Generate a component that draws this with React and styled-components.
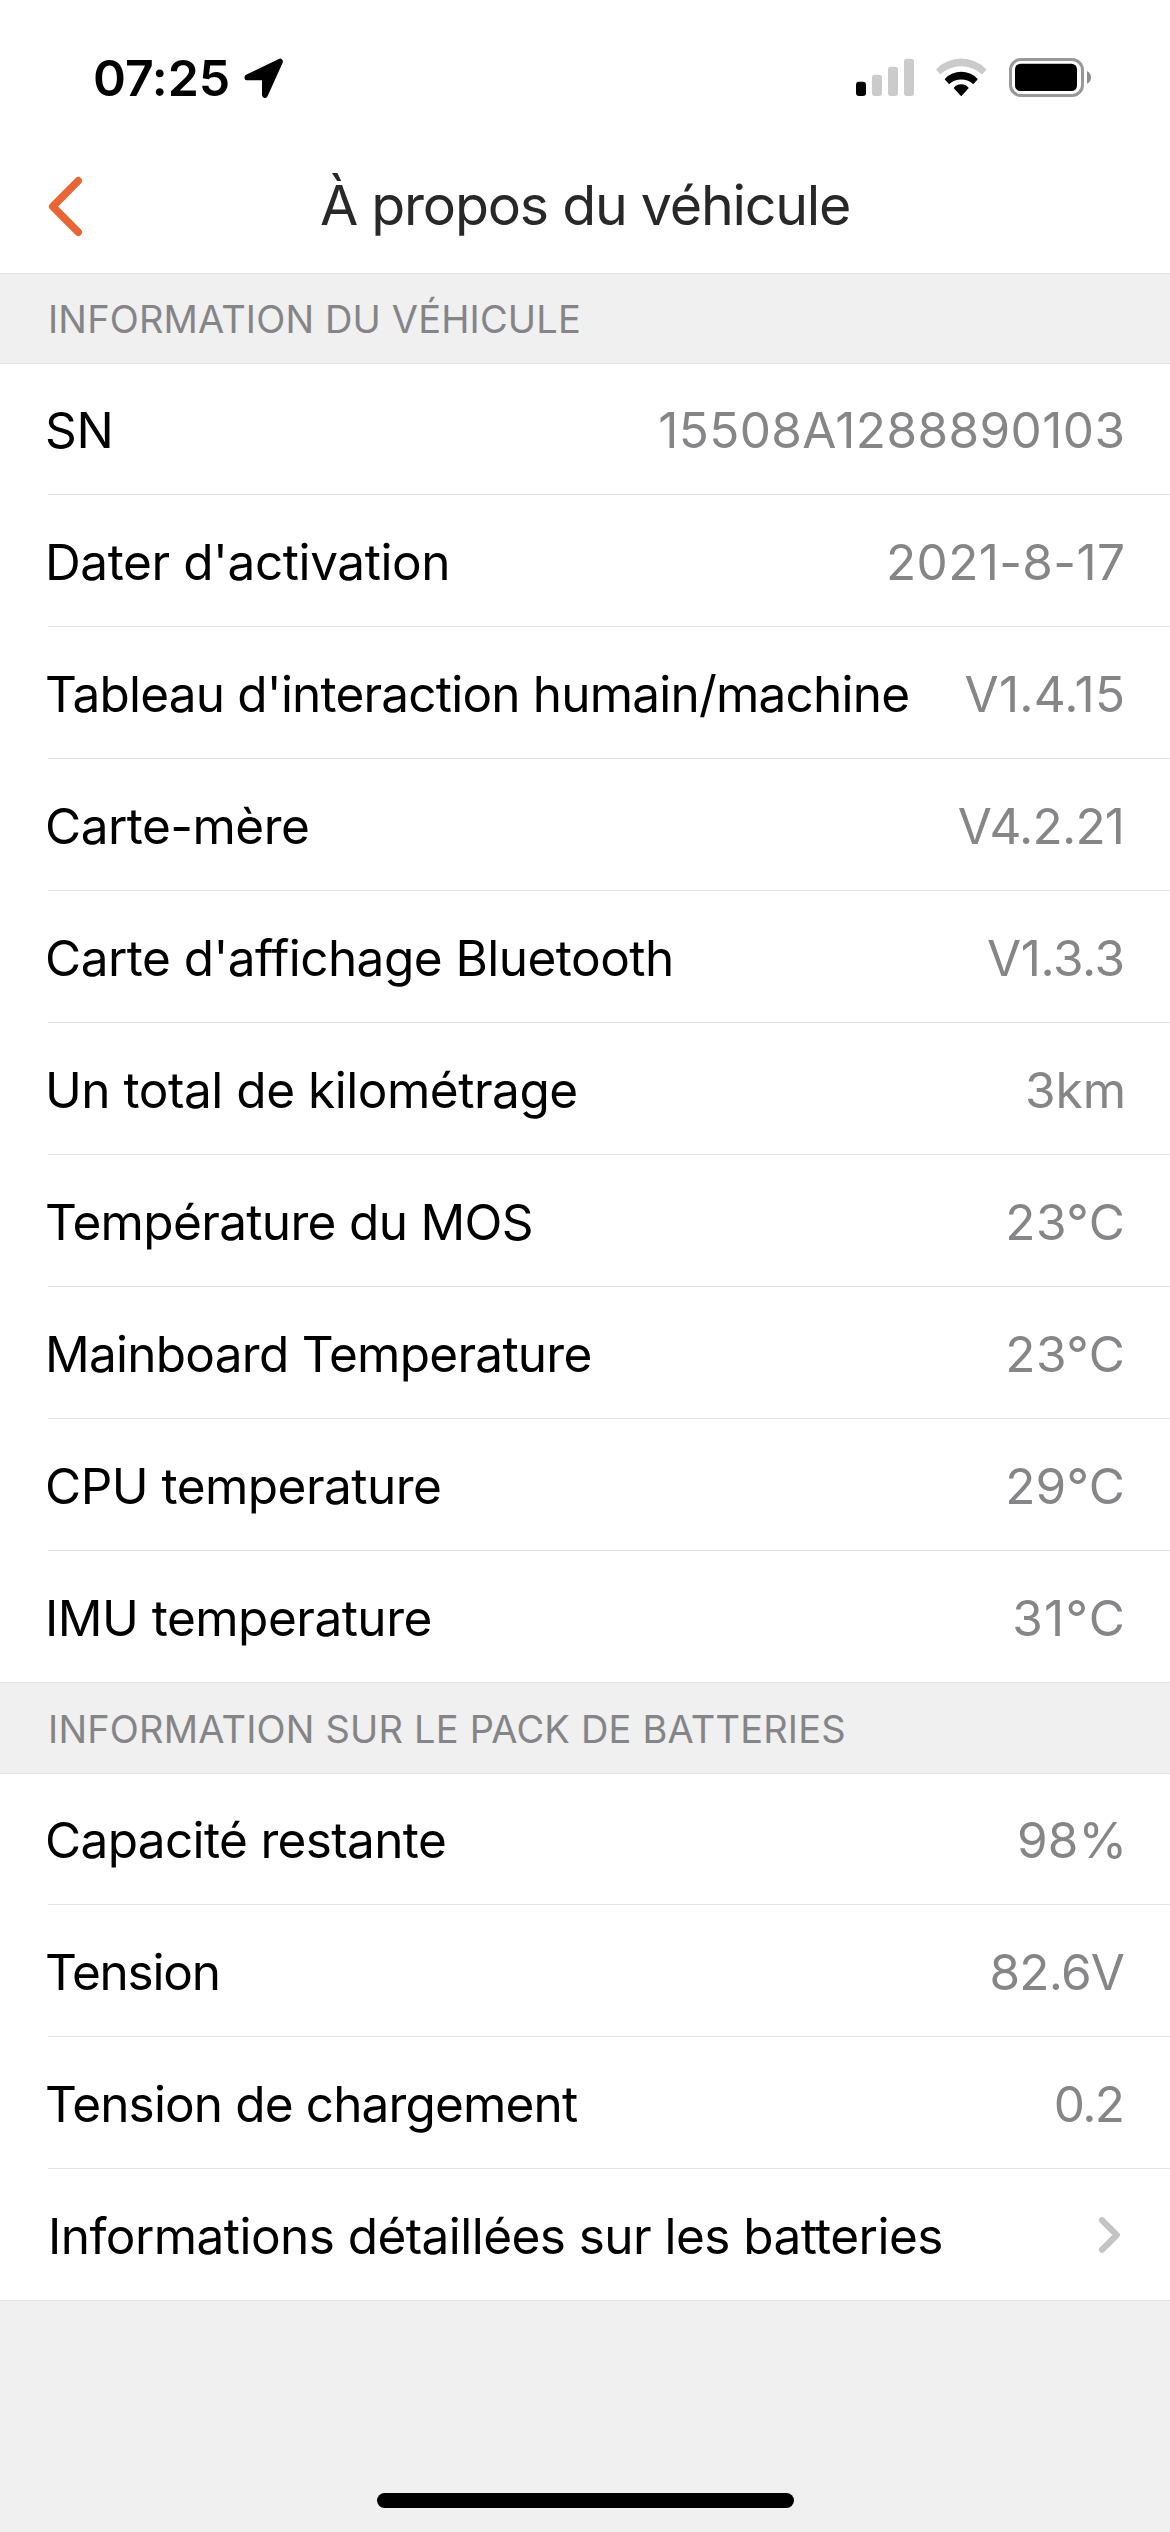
import React from "react";
import styled, { createGlobalStyle } from "styled-components";

const GlobalStyle = createGlobalStyle`
  * { box-sizing: border-box; }
  body { margin: 0; background: #f0f0f0; }
`;

const Screen = styled.div`
  display: flex;
  flex-direction: column;
  width: 1170px;
  height: 2532px;
  background: #f0f0f0;
  color: #000;
  font-family: "Inter", "Liberation Sans", sans-serif;
`;

const StatusBar = styled.header`
  display: flex;
  justify-content: space-between;
  align-items: flex-start;
  height: 141px;
  padding: 48px 79px 0 93px;
  background: #fff;
`;

const StatusGroup = styled.div`
  display: flex;
  align-items: flex-start;
  gap: ${(p) => p.$gap}px;
`;

const Clock = styled.span`
  width: 136px;
  font-size: 50px;
  font-weight: 600;
  line-height: 60px;
  letter-spacing: -0.13px;
  white-space: nowrap;
`;

const StatusIcon = styled.svg`
  display: block;
  flex: none;
  margin-top: 10px;
`;

const NavBar = styled.nav`
  display: grid;
  grid-template-columns: 150px 1fr 150px;
  align-items: start;
  height: 133px;
  background: #fff;
  border-bottom: 1px solid #e3e3e4;
`;

const BackButton = styled.button`
  display: flex;
  justify-self: start;
  margin: 35px 0 0 48px;
  padding: 0;
  border: 0;
  background: none;
`;

const Title = styled.h1`
  margin: 30px 0 0;
  font-size: 55.5px;
  font-weight: 400;
  line-height: 68px;
  letter-spacing: -1.23px;
  text-align: center;
  color: #282828;
  white-space: nowrap;
`;

const SectionHeader = styled.h2`
  height: ${(p) => p.$height}px;
  margin: 0;
  padding: ${(p) => p.$top}px 0 0 48px;
  border-bottom: 1px solid #e3e3e4;
  font-size: 38px;
  font-weight: 400;
  line-height: 46px;
  letter-spacing: ${(p) => p.$tracking}px;
  color: #858487;
  white-space: nowrap;
`;

const List = styled.ul`
  margin: 0;
  padding: 0;
  list-style: none;
  background: #fff;
  border-bottom: 1px solid #e3e3e4;
`;

const Row = styled.li`
  display: flex;
  justify-content: space-between;
  align-items: flex-start;
  height: 132px;
  margin-left: 48px;
  padding: 37px 45px 0 0;
  border-bottom: 1px solid #e3e3e4;

  &:first-child {
    height: 131px;
    padding-top: 36px;
  }

  &:last-child {
    height: 131px;
    border-bottom: 0;
  }
`;

const Label = styled.span`
  margin-left: ${(p) => (p.$link ? 0 : -3)}px;
  font-size: 49.5px;
  line-height: 60px;
  letter-spacing: ${(p) => p.$tracking}px;
  font-variant-ligatures: no-common-ligatures;
  white-space: nowrap;
`;

const Value = styled.span`
  margin-right: ${(p) => -p.$tracking - (p.$overhang || 0)}px;
  font-size: 49.5px;
  line-height: 60px;
  letter-spacing: ${(p) => p.$tracking}px;
  color: #868587;
  white-space: nowrap;
`;

const Disclosure = styled.svg`
  display: block;
  flex: none;
  margin: 10px 3px 0 0;
`;

const HomeArea = styled.footer`
  display: flex;
  flex: 1;
  justify-content: center;
  align-items: flex-end;
  padding-bottom: 24px;
`;

const HomeIndicator = styled.div`
  width: 417px;
  height: 15px;
  border-radius: 8px;
  background: #000;
`;

const vehicleRows = [
  ["SN", -0.36, "15508A1288890103", 0.41],
  ["Dater d'activation", -0.41, "2021-8-17", 0.36],
  ["Tableau d'interaction humain/machine", -0.8, "V1.4.15", 0.24],
  ["Carte-mère", -0.53, "V4.2.21", -0.78],
  ["Carte d'affichage Bluetooth", -0.53, "V1.3.3", -0.46],
  ["Un total de kilométrage", -0.47, "3km", 0, 1],
  ["Température du MOS", -0.66, "23°C", 0.55],
  ["Mainboard Temperature", -0.74, "23°C", 0.55],
  ["CPU temperature", -0.52, "29°C", 0.27],
  ["IMU temperature", -0.51, "31°C", 1.33],
];

const batteryRows = [
  ["Capacité restante", -0.65, "98%", 0, 2],
  ["Tension", -1.2, "82.6V", -0.8],
  ["Tension de chargement", -0.86, "0.2", -1.6],
];

function InfoRow({ row: [label, labelTracking, value, valueTracking, overhang] }) {
  return (
    <Row>
      <Label $tracking={labelTracking}>{label}</Label>
      <Value $tracking={valueTracking} $overhang={overhang}>
        {value}
      </Value>
    </Row>
  );
}

function LocationIcon() {
  return (
    <StatusIcon width="40" height="41" viewBox="0 0 40 41">
      <path
        d="M3.4 19.4 36 3.6 20.9 37 V19.4 Z"
        fill="#000"
        stroke="#000"
        strokeWidth="5.8"
        strokeLinejoin="round"
      />
    </StatusIcon>
  );
}

function SignalIcon() {
  return (
    <StatusIcon width="58" height="38" viewBox="0 0 58 38">
      <rect x="0" y="23.7" width="10" height="14.3" rx="3" fill="#000" />
      <rect x="16" y="16.8" width="10" height="21.2" rx="3" fill="#cbcbcb" />
      <rect x="32" y="8.8" width="10" height="29.2" rx="3" fill="#cbcbcb" />
      <rect x="48" y="0.8" width="10" height="37.2" rx="3" fill="#cbcbcb" />
    </StatusIcon>
  );
}

function WifiIcon() {
  return (
    <StatusIcon width="50.4" height="38" viewBox="0 -2 151 114">
      <path d="M1 31 A104 104 0 0 1 150 31 Q151.5 32.5 150 34 L139 46 Q137.5 47.5 136 46 A91 91 0 0 0 15 46 Q13.5 47.5 12 46 L1 34 Q-.5 32.5 1 31Z" fill="#cbcbcb" />
      <path d="M27 60 A66.7 66.7 0 0 1 124 60 Q125.5 61.5 124 63 L113 75 Q111.5 76.5 110 75 A54.6 54.6 0 0 0 41 75 Q39.5 76.5 38 75 L27 63 Q25.5 61.5 27 60Z" fill="#000" />
      <path d="M54 86.5 A28.5 28.5 0 0 1 97 86.5 Q98.5 88 97 89.5 L77 111 Q75.5 112.5 74 111 L54 89.5 Q52.5 88 54 86.5Z" fill="#000" />
    </StatusIcon>
  );
}

function BatteryIcon() {
  return (
    <StatusIcon width="82" height="39" viewBox="0 0 82 39">
      <rect x="1.5" y="1.5" width="72" height="36" rx="10.5" fill="none" stroke="#999" strokeWidth="3" />
      <rect x="6" y="5.7" width="62" height="27.3" rx="5.5" fill="#000" />
      <path d="M78 13 C80.7 14.2 82 16.7 82 19.4 S80.7 24.6 78 25.8 Z" fill="#8f8f8f" />
    </StatusIcon>
  );
}

export default function App() {
  return (
    <>
      <GlobalStyle />
      <Screen>
        <StatusBar>
          <StatusGroup $gap={15}>
            <Clock>07:25</Clock>
            <LocationIcon />
          </StatusGroup>
          <StatusGroup $gap={22.4}>
            <SignalIcon />
            <WifiIcon />
            <BatteryIcon />
          </StatusGroup>
        </StatusBar>
        <NavBar>
          <BackButton aria-label="Retour">
            <svg width="35" height="61" viewBox="0 0 35 61" fill="none">
              <path
                d="M30.2 4.8 4.8 30.5 30.2 56.2"
                stroke="#e86535"
                strokeWidth="7.6"
                strokeLinecap="round"
                strokeLinejoin="round"
              />
            </svg>
          </BackButton>
          <Title>À propos du véhicule</Title>
        </NavBar>

        <SectionHeader $height={90} $top={22} $tracking={0.15}>
          INFORMATION DU VÉHICULE
        </SectionHeader>
        <List>
          {vehicleRows.map((row) => (
            <InfoRow key={row[0]} row={row} />
          ))}
        </List>

        <SectionHeader $height={91} $top={23} $tracking={0.19}>
          INFORMATION SUR LE PACK DE BATTERIES
        </SectionHeader>
        <List>
          {batteryRows.map((row) => (
            <InfoRow key={row[0]} row={row} />
          ))}
          <Row>
            <Label $link $tracking={-0.55}>
              Informations détaillées sur les batteries
            </Label>
            <Disclosure width="24" height="38" viewBox="0 0 24 38" fill="none">
              <path
                d="M4 4.2 18.8 19 4 33.8"
                stroke="#c4c4c6"
                strokeWidth="6.2"
                strokeLinecap="round"
                strokeLinejoin="round"
              />
            </Disclosure>
          </Row>
        </List>

        <HomeArea>
          <HomeIndicator />
        </HomeArea>
      </Screen>
    </>
  );
}
